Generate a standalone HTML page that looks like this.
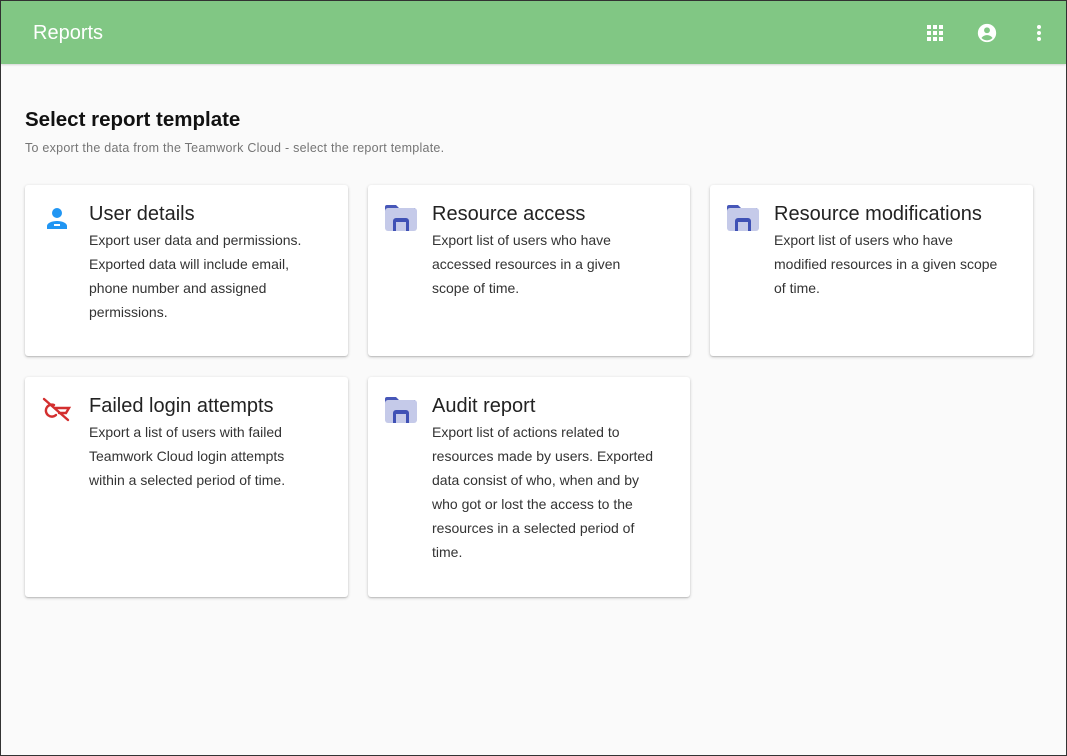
<!DOCTYPE html>
<html><head><style>
*{margin:0;padding:0;box-sizing:border-box}
body{width:1067px;height:756px;overflow:hidden;font-family:"Liberation Sans",sans-serif;background:#fafafa;border:1px solid #333;position:relative}
.hdr{position:absolute;left:0;top:0;width:1065px;height:63px;background:#81c784;box-shadow:0 1px 2px rgba(0,0,0,.15)}
.hdr .t{position:absolute;left:32px;top:21px;color:#fff;font-size:20px}
h1{position:absolute;left:24px;top:107px;font-size:20.5px;font-weight:bold;color:#111}
.sub{position:absolute;left:24px;top:140px;font-size:12.5px;letter-spacing:.25px;color:#757575}
.card{position:absolute;background:#fff;border-radius:3px;box-shadow:0 1px 3px rgba(0,0,0,.2),0 1px 1px rgba(0,0,0,.12)}
.card .ti{position:absolute;left:64px;top:18px;font-size:20px;color:#222}
.card .d{position:absolute;left:64px;top:43px;width:222px;font-size:14px;line-height:24px;color:#333}
.card svg{position:absolute;left:16px;top:18px}
</style></head><body>
<div class="hdr"><div class="t">Reports</div>
<svg style="position:absolute;left:925px;top:23px" width="18" height="18" viewBox="0 0 18 18" fill="#fff"><rect x="1" y="1" width="4" height="4"/><rect x="7" y="1" width="4" height="4"/><rect x="13" y="1" width="4" height="4"/><rect x="1" y="7" width="4" height="4"/><rect x="7" y="7" width="4" height="4"/><rect x="13" y="7" width="4" height="4"/><rect x="1" y="13" width="4" height="4"/><rect x="7" y="13" width="4" height="4"/><rect x="13" y="13" width="4" height="4"/></svg>
<svg style="position:absolute;left:975px;top:21px" width="22" height="22" viewBox="0 0 24 24"><circle cx="12" cy="12" r="10" fill="#fff"/><circle cx="12" cy="9" r="3.2" fill="#81c784"/><path d="M6 17.5c1.5-2.5 4-3.2 6-3.2s4.5.7 6 3.2c-1.6 1.7-3.7 2.5-6 2.5s-4.4-.8-6-2.5z" fill="#81c784"/></svg>
<svg style="position:absolute;left:1033px;top:22px" width="10" height="20" viewBox="0 0 10 20" fill="#fff"><circle cx="5" cy="4" r="2"/><circle cx="5" cy="10" r="2"/><circle cx="5" cy="16" r="2"/></svg>
</div>
<h1>Select report template</h1>
<div class="sub">To export the data from the Teamwork Cloud - select the report template.</div>

<div class="card" style="left:24px;top:184px;width:323px;height:171px">
<svg width="32" height="32" viewBox="0 0 32 32"><circle cx="16" cy="10" r="5" fill="#2196f3"/><path d="M6 26v-3c0-3 5-5 10-5s10 2 10 5v3z" fill="#2196f3"/><rect x="13" y="21" width="6" height="2" fill="#fff"/></svg>
<div class="ti">User details</div><div class="d">Export user data and permissions. Exported data will include email, phone number and assigned permissions.</div></div>

<div class="card" style="left:367px;top:184px;width:322px;height:171px">
<svg width="34" height="32" viewBox="0 0 34 32"><path d="M3 2h9l3 3h16v20H1V4a2 2 0 0 1 2-2z" fill="#4757b8"/><rect x="1" y="5" width="32" height="23" rx="3" fill="#c5cae9"/><path d="M9 28V18a3 3 0 0 1 3-3h10a3 3 0 0 1 3 3v10h-3v-9h-10v9z" fill="#3f51b5"/></svg>
<div class="ti">Resource access</div><div class="d" style="width:215px">Export list of users who have accessed resources in a given scope of time.</div></div>

<div class="card" style="left:709px;top:184px;width:323px;height:171px">
<svg width="34" height="32" viewBox="0 0 34 32"><path d="M3 2h9l3 3h16v20H1V4a2 2 0 0 1 2-2z" fill="#4757b8"/><rect x="1" y="5" width="32" height="23" rx="3" fill="#c5cae9"/><path d="M9 28V18a3 3 0 0 1 3-3h10a3 3 0 0 1 3 3v10h-3v-9h-10v9z" fill="#3f51b5"/></svg>
<div class="ti">Resource modifications</div><div class="d" style="width:235px">Export list of users who have modified resources in a given scope of time.</div></div>

<div class="card" style="left:24px;top:376px;width:323px;height:220px">
<svg width="32" height="32" viewBox="0 0 32 32" fill="none" stroke="#d32f2f" stroke-width="2.4" stroke-linecap="round"><line x1="3" y1="4" x2="27" y2="25"/><path d="M13 10a6 6 0 1 0 2 10"/><path d="M14 13h14l-3 5h-7"/></svg>
<div class="ti">Failed login attempts</div><div class="d">Export a list of users with failed Teamwork Cloud login attempts within a selected period of time.</div></div>

<div class="card" style="left:367px;top:376px;width:322px;height:220px">
<svg width="34" height="32" viewBox="0 0 34 32"><path d="M3 2h9l3 3h16v20H1V4a2 2 0 0 1 2-2z" fill="#4757b8"/><rect x="1" y="5" width="32" height="23" rx="3" fill="#c5cae9"/><path d="M9 28V18a3 3 0 0 1 3-3h10a3 3 0 0 1 3 3v10h-3v-9h-10v9z" fill="#3f51b5"/></svg>
<div class="ti">Audit report</div><div class="d">Export list of actions related to resources made by users. Exported data consist of who, when and by who got or lost the access to the resources in a selected period of time.</div></div>
</body></html>
